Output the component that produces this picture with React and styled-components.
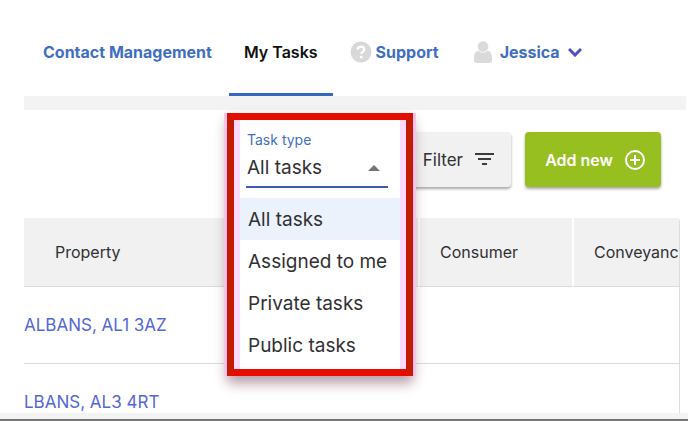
///////////////////////
//// Built-in
import React, { useState } from 'react';

///////////////////////
//// External
import styled, { createGlobalStyle, ThemeProvider } from "styled-components";


const theme = {
    text: "#303033",
    link: "#3f6fc0",
    address: "#5468d4",
    grey: "#f1f1f1",
    line: "#dcdcdc",
    green: "#97bf1f",
    frame: "#e60c00",
    frameSide: "#c21c00"
};

const taskTypes = [ "All tasks", "Assigned to me", "Private tasks", "Public tasks" ];

const rows = [ "ALBANS, AL1 3AZ", "LBANS, AL3 4RT" ];


export default function App() {
    const [ taskType, setTaskType ] = useState(taskTypes[0]);

    return (
        <ThemeProvider theme={ theme }>
            <GlobalStyle/>
            <Page>
                <Nav>
                    <NavLink href="#contacts">Contact Management</NavLink>
                    <NavLink href="#tasks" $active aria-current="page">My Tasks</NavLink>
                    <NavLink href="#support"><HelpIcon/>Support</NavLink>
                    <UserLink href="#account"><UserIcon/>Jessica<ChevronIcon/></UserLink>
                </Nav>
                <Divider/>

                <Toolbar>
                    <PickerAnchor>
                        <Picker>
                            <PickerLabel htmlFor="task-type">Task type</PickerLabel>
                            <SelectWrap>
                                <Select
                                    id="task-type"
                                    value={ taskType }
                                    onChange={ e => setTaskType(e.target.value) }
                                >
                                    { taskTypes.map(type => <option key={ type }>{ type }</option>) }
                                </Select>
                                <ArrowIcon/>
                            </SelectWrap>
                            <Options>
                                { taskTypes.map(type => (
                                    <li key={ type }>
                                        <Option
                                            type="button"
                                            $selected={ type === taskType }
                                            onClick={ () => setTaskType(type) }
                                        >
                                            { type }
                                        </Option>
                                    </li>
                                )) }
                            </Options>
                        </Picker>
                    </PickerAnchor>
                    <FilterButton type="button">Filter<FilterIcon/></FilterButton>
                    <AddButton type="button">Add new<PlusIcon/></AddButton>
                </Toolbar>

                <TableFrame>
                    <Table>
                        <thead>
                        <tr>
                            <HeadCell $indent={ 31 }>Property</HeadCell>
                            <HeadCell $width={ 154 }>Consumer</HeadCell>
                            <HeadCell $width={ 107 }>Conveyanc</HeadCell>
                        </tr>
                        </thead>
                        <tbody>
                        { rows.map(address => (
                            <tr key={ address }>
                                <Cell><AddressLink href="#property">{ address }</AddressLink></Cell>
                                <Cell/>
                                <Cell/>
                            </tr>
                        )) }
                        </tbody>
                    </Table>
                </TableFrame>
                <Footer/>
            </Page>
        </ThemeProvider>
    );
};


///////////////////////
//// Icons

function HelpIcon() {
    return (
        <svg width="22" height="22" viewBox="0 0 22 22" aria-hidden="true">
            <circle cx="11" cy="11" r="10.5" fill="#d8d8d8"/>
            <path d="M7.7 8.6C7.8 6.6 9.2 5.6 11 5.6c1.900 0 3.300 1.100 3.300 2.800 0 2.400-3 2.400-3 4.700"
                  fill="none" stroke="#fff" strokeWidth="2.300"/>
            <circle cx="11.200" cy="16" r="1.500" fill="#fff"/>
        </svg>
    );
}

function UserIcon() {
    return (
        <svg width="18" height="22" viewBox="0 0 18 22" fill="#dadada" aria-hidden="true">
            <circle cx="9" cy="5.500" r="5.300"/>
            <path d="M4.500 9.800C6 11.300 7.400 11.700 9 11.700s3-.4 4.500-1.900c3 .7 4.500 3.200 4.500 6.700v2.500c0 2-1 3-3 3H3c-2 0-3-1-3-3v-2.500c0-3.500 1.500-6 4.500-6.700z"/>
        </svg>
    );
}

function ChevronIcon() {
    return (
        <svg width="14" height="10" viewBox="0 0 14 10" aria-hidden="true">
            <path d="M1 2L7 8l6-6" fill="none" stroke="#4b50cf" strokeWidth="3"/>
        </svg>
    );
}

function ArrowIcon() {
    return (
        <svg width="12" height="6" viewBox="0 0 12 6" aria-hidden="true">
            <path d="M0 6L6 0l6 6z" fill="#757575"/>
        </svg>
    );
}

function FilterIcon() {
    return (
        <svg width="19" height="13" viewBox="0 0 19 13" fill="#3c3c40" aria-hidden="true">
            <path d="M0 0h19v2H0zM3 5h13v2H3zM7 10h5v2H7z"/>
        </svg>
    );
}

function PlusIcon() {
    return (
        <svg width="20" height="20" viewBox="0 0 20 20" fill="none" stroke="#fff" strokeWidth="2" aria-hidden="true">
            <circle cx="10" cy="10" r="9"/>
            <path d="M10 5v10M5 10h10"/>
        </svg>
    );
}


///////////////////////
//// Styles

const GlobalStyle = createGlobalStyle`
  * {
    box-sizing: border-box;
  }

  body {
    margin: 0;
    background: #fff;
    color: ${ theme.text };
    font-family: Inter, "Open Sans", sans-serif;
  }

  button, select {
    font-family: inherit;
    color: inherit;
  }
`

const Page = styled.div`
  display: flex;
  flex-direction: column;
  height: 100vh;
  overflow: hidden;
`

const Nav = styled.nav`
  display: flex;
  gap: 2px;
  height: 96px;
  padding: 8px 0 0 28px;
`

const NavLink = styled.a`
  display: flex;
  align-items: center;
  gap: 4px;
  padding: 3px 15px 0;
  border-bottom: 3px solid ${ props => props.$active ? "#3468bd" : "transparent" };
  color: ${ props => props.$active ? "#111" : props.theme.link };
  font-size: 16px;
  font-weight: ${ props => props.$active ? 600 : 700 };
  text-decoration: none;
  white-space: nowrap;
`

const UserLink = styled(NavLink)`
  gap: 8px;
  padding-left: 18px;
`

const Divider = styled.div`
  flex: none;
  height: 14px;
  margin: 0 2px 0 24px;
  background: #f3f3f3;
`

const Toolbar = styled.div`
  display: flex;
  justify-content: flex-end;
  gap: 14px;
  padding: 22px 27px 31px 24px;
`

// the open picker hangs over the filter button and the table
const PickerAnchor = styled.div`
  position: relative;
  width: 0;
`

const Picker = styled.div`
  position: absolute;
  top: -19px;
  right: -28px;
  z-index: 1;
  width: 186px;
  padding: 11px 0 3px;
  border: 7px solid ${ props => props.theme.frame };
  border-left-color: ${ props => props.theme.frameSide };
  border-right-color: ${ props => props.theme.frameSide };
  background: linear-gradient(90deg, #ffdcff 6px, #fff 6px, #fff calc(100% - 6px), #ffdcff calc(100% - 6px));
  box-shadow: -3px 0 #ffc4ec, 3px 0 #ffc4ec, 0 7px 12px rgba(70, 0, 30, 0.4);
`

const PickerLabel = styled.label`
  display: block;
  padding-left: 13px;
  color: ${ props => props.theme.link };
  font-size: 14px;
  line-height: 18px;
`

const SelectWrap = styled.div`
  display: flex;
  align-items: center;
  height: 39px;
  margin: 0 18px 0 12px;
  border-bottom: 2px solid #3e58b8;

  svg {
    flex: none;
    margin-right: 8px;
    pointer-events: none;
  }
`

const Select = styled.select`
  flex: 1;
  min-width: 0;
  padding: 0 0 0 1px;
  border: none;
  outline: none;
  appearance: none;
  background: transparent;
  font-size: 19px;
`

const Options = styled.ul`
  margin: 10px 6px 0;
  padding: 0;
  list-style: none;
`

const Option = styled.button`
  width: 100%;
  height: 42px;
  padding: 0 0 0 8px;
  border: none;
  background: ${ props => props.$selected ? "#ebf2fb" : "#fff" };
  font-size: 19px;
  text-align: left;
  white-space: nowrap;
  cursor: pointer;
`

const Button = styled.button`
  display: flex;
  align-items: center;
  justify-content: flex-end;
  height: 55px;
  border: none;
  border-radius: 4px;
  font-size: 16px;
  box-shadow: 0 2px 3px rgba(0, 0, 0, 0.35);
  cursor: pointer;
`

const FilterButton = styled(Button)`
  gap: 12px;
  width: 112px;
  padding: 0 17px;
  background: ${ props => props.theme.grey };
  font-size: 17px;
`

const AddButton = styled(Button)`
  gap: 12px;
  width: 136px;
  padding: 0 16px;
  background: ${ props => props.theme.green };
  color: #fff;
  font-weight: 600;
`

const TableFrame = styled.div`
  flex: 1;
  min-height: 0;
  margin: 0 8px 0 24px;
  border-right: 1px solid ${ props => props.theme.line };
  border-top-right-radius: 4px;
  overflow: hidden;
`

const Table = styled.table`
  width: 100%;
  border-collapse: separate;
  border-spacing: 0;
  table-layout: fixed;
`

const HeadCell = styled.th`
  width: ${ props => props.$width ? `${ props.$width }px` : "auto" };
  height: 69px;
  padding: 0 0 0 ${ props => props.$indent || 20 }px;
  border-bottom: 1px solid ${ props => props.theme.line };
  background: ${ props => props.theme.grey };
  font-size: 16px;
  font-weight: 400;
  text-align: left;
  overflow: hidden;

  & + & {
    border-left: 2px solid #fff;
  }
`

const Cell = styled.td`
  height: 77px;
  padding: 0;
  border-bottom: 1px solid ${ props => props.theme.line };
`

const AddressLink = styled.a`
  color: ${ props => props.theme.address };
  font-size: 17px;
  text-decoration: none;
`

const Footer = styled.footer`
  flex: none;
  height: 8px;
  border-bottom: 2px solid #747474;
  background: #f3f3f3;
`
